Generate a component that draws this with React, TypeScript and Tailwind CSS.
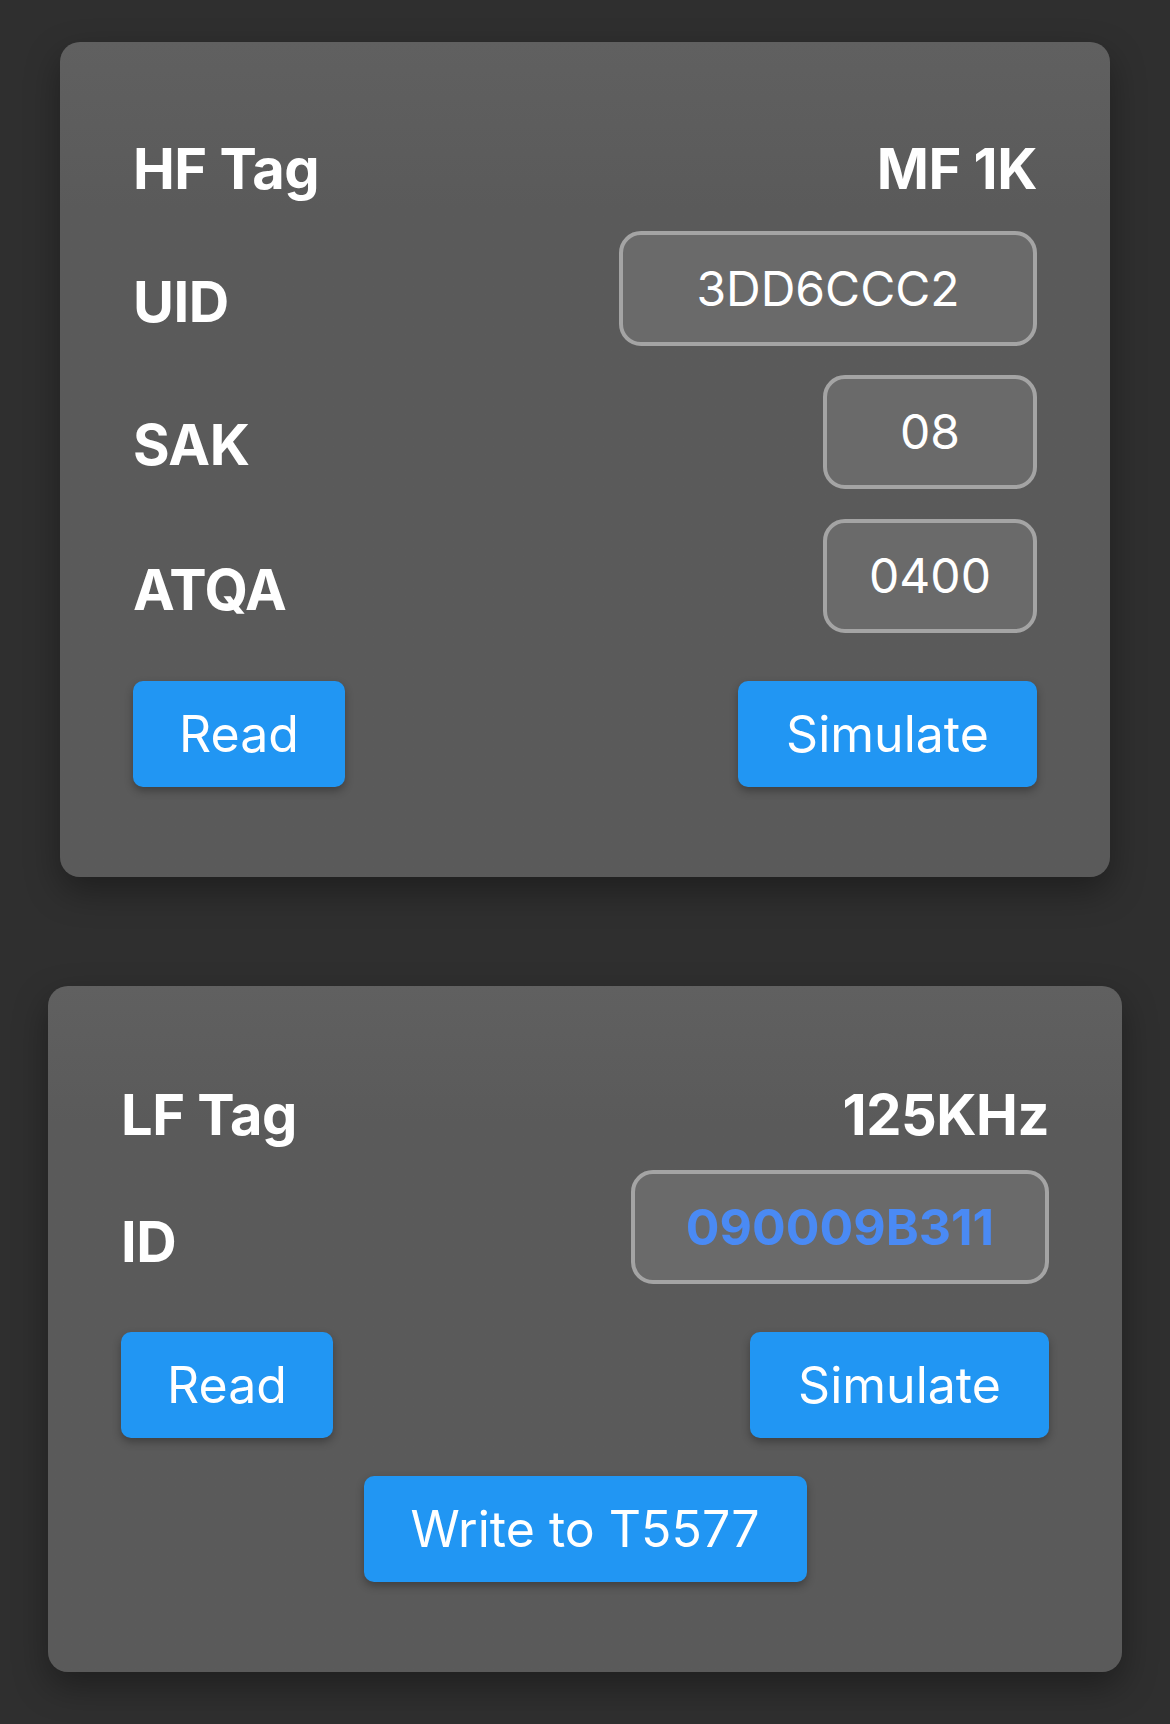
import React from "react";

const font = { fontFamily: "Inter, 'Noto Sans', sans-serif" };

function Field({ label, value, wide, blue, shift }: { label: string; value: string; wide?: boolean; blue?: boolean; shift: string }) {
  return (
    <div className="flex h-full items-center justify-between">
      <span className={`text-[56px] font-bold text-white tracking-[-0.5px] leading-none ${shift}`}>{label}</span>
      <div
        className={`flex items-center justify-center rounded-[22px] border-[4px] border-[#a4a4a4] bg-[#6a6a6a] ${
          wide ? "w-[418px]" : "w-[214px]"
        } h-full`}
      >
        <span className={`leading-none ${blue ? "text-[50px] font-bold text-[#4a8af4]" : "text-[48px] text-white"}`}>{value}</span>
      </div>
    </div>
  );
}

function Btn({ children, w }: { children: React.ReactNode; w: string }) {
  return (
    <button
      className={`${w} h-[106px] rounded-[10px] bg-[#2196f3] text-white text-[50px] leading-none shadow-[0_4px_8px_rgba(0,0,0,0.3)]`}
    >
      {children}
    </button>
  );
}

export default function App() {
  return (
    <div className="min-h-[1724px] w-[1170px] bg-[#2f2f2f] pt-[42px] pb-[52px]" style={font}>
      {/* HF card */}
      <div className="mx-[60px] rounded-[20px] bg-gradient-to-b from-[#606060] to-[#5a5a5a] to-[20%] px-[73px] pt-[91px] pb-[90px] flex flex-col shadow-[0_14px_34px_rgba(0,0,0,0.35)]">
        <div className="h-[72px] flex items-center justify-between">
          <span className="text-[56px] font-bold text-white tracking-[-0.5px] leading-none">HF Tag</span>
          <span className="text-[56px] font-bold text-white tracking-[-0.5px] leading-none">MF 1K</span>
        </div>
        <div className="mt-[26px] h-[115px]">
          <Field label="UID" value="3DD6CCC2" wide shift="pt-[27px]" />
        </div>
        <div className="mt-[29px] h-[114px]">
          <Field label="SAK" value="08" shift="pt-[26px]" />
        </div>
        <div className="mt-[30px] h-[114px]">
          <Field label="ATQA" value="0400" shift="pt-[28px]" />
        </div>
        <div className="mt-[48px] flex justify-between">
          <Btn w="w-[212px]">Read</Btn>
          <Btn w="w-[299px]">Simulate</Btn>
        </div>
      </div>

      {/* LF card */}
      <div className="mx-[48px] mt-[109px] rounded-[20px] bg-gradient-to-b from-[#606060] to-[#5a5a5a] to-[20%] px-[73px] pt-[93px] pb-[90px] flex flex-col shadow-[0_14px_34px_rgba(0,0,0,0.35)]">
        <div className="h-[72px] flex items-center justify-between">
          <span className="text-[56px] font-bold text-white tracking-[-0.5px] leading-none">LF Tag</span>
          <span className="text-[56px] font-bold text-white tracking-[-0.5px] leading-none">125KHz</span>
        </div>
        <div className="mt-[19px] h-[114px]">
          <Field label="ID" value="090009B311" wide blue shift="pt-[30px]" />
        </div>
        <div className="mt-[48px] flex justify-between">
          <Btn w="w-[212px]">Read</Btn>
          <Btn w="w-[299px]">Simulate</Btn>
        </div>
        <div className="mt-[38px] flex justify-center">
          <Btn w="w-[443px]">Write to T5577</Btn>
        </div>
      </div>
    </div>
  );
}
